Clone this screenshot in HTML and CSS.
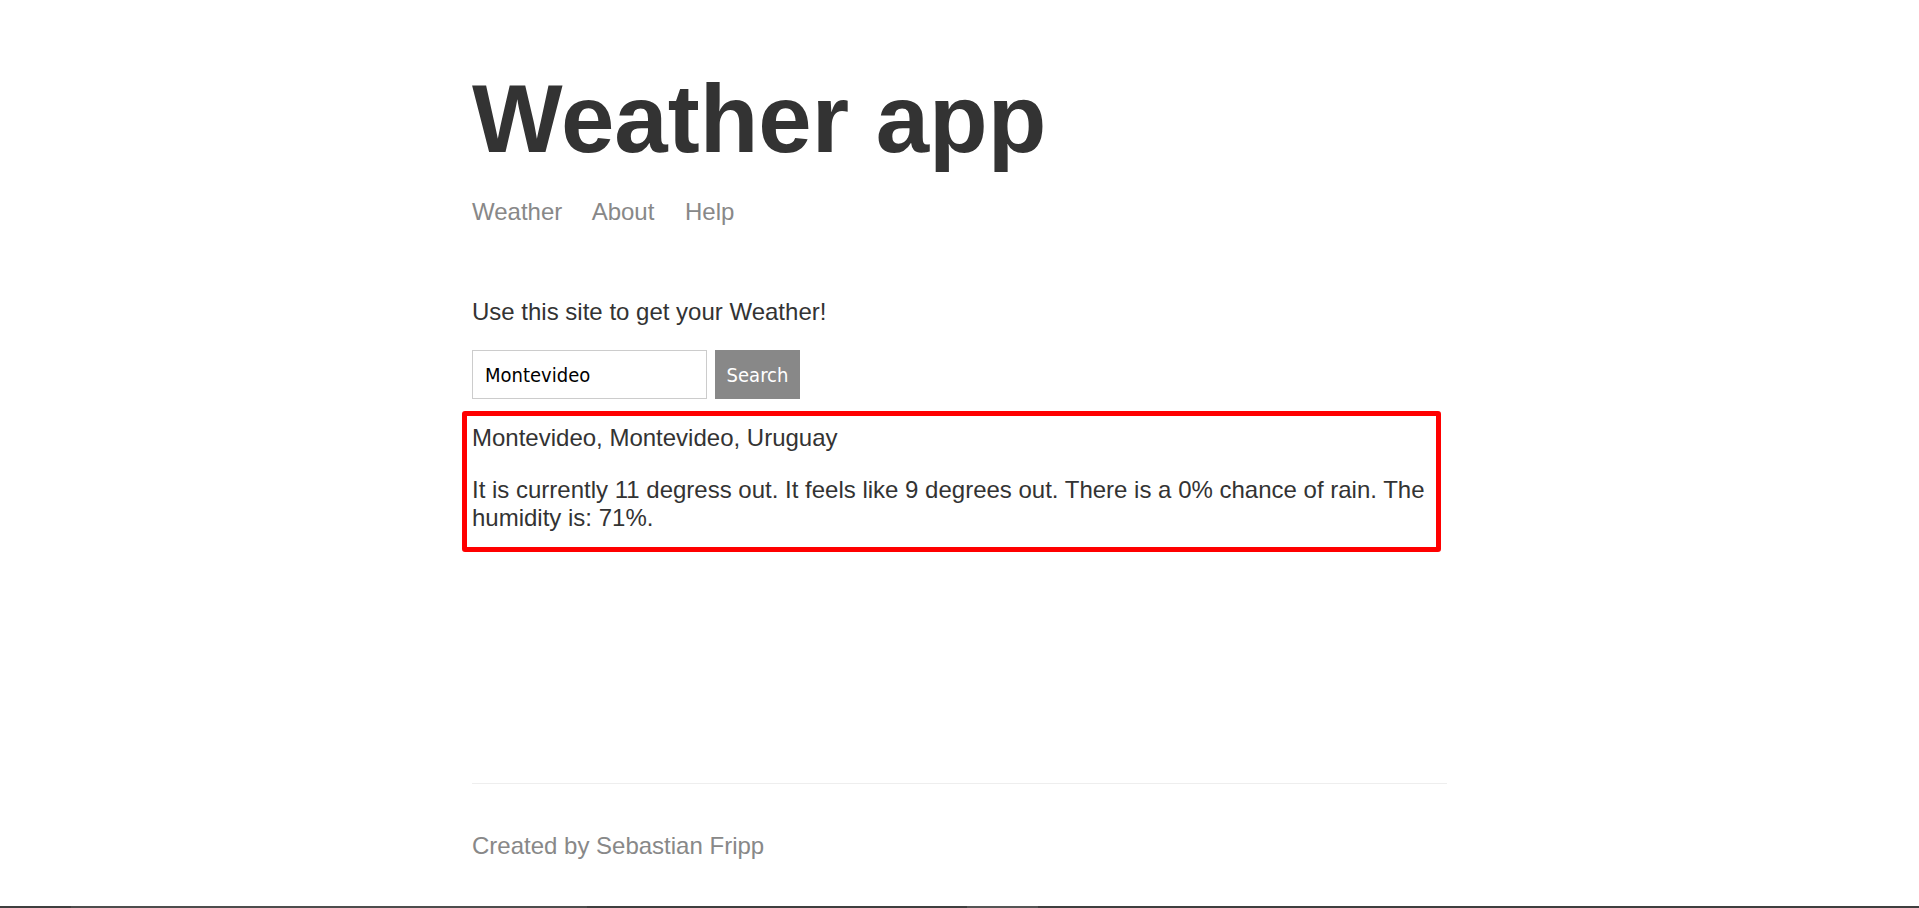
FILE: index.html
```html
<!DOCTYPE html>
<html lang="en">
<head>
<meta charset="utf-8">
<title>Weather</title>
<link rel="stylesheet" href="styles.css">
</head>
<body>
  <header class="site-header">
    <h1 class="title">Weather app</h1>
    <nav class="nav">
      <a class="nav-link" href="#">Weather</a>
      <a class="nav-link" href="#">About</a>
      <a class="nav-link" href="#">Help</a>
    </nav>
  </header>
  <main class="main-content">
    <p class="intro">Use this site to get your Weather!</p>
    <form class="search-form">
      <input class="search-input" type="text" value="Montevideo">
      <button class="search-button" type="button">Search</button>
    </form>
    <div class="result">
      <p class="result-location">Montevideo, Montevideo, Uruguay</p>
      <p class="result-forecast">It is currently 11 degress out. It feels like 9 degrees out. There is a 0% chance of rain. The humidity is: 71%.</p>
    </div>
  </main>
  <footer class="site-footer">
    <p class="credit">Created by Sebastian Fripp</p>
  </footer>
  <div class="taskbar-edge"></div>
</body>
</html>
```
FILE: styles.css
```css
html {
  background: #ffffff;
}

body {
  margin: 0 auto;
  max-width: 975px;
  padding: 0 24px;
  display: flex;
  flex-direction: column;
  min-height: 100vh;
  font-family: "Liberation Sans", Arial, sans-serif;
  font-size: 24px;
  color: #333333;
}

.site-header {
  margin-bottom: 48px;
}

.title {
  font-size: 96px;
  font-weight: bold;
  line-height: normal;
  margin: 64px 0 24px;
  color: #333333;
}

.nav-link {
  color: #888888;
  text-decoration: none;
  margin-right: 24px;
}

.main-content {
  flex-grow: 1;
}

.intro {
  margin: 24px 0;
}

.search-form {
  display: flex;
  gap: 8px;
  margin: 0;
}

.search-input,
.search-button {
  font-family: "DejaVu Sans Condensed", "Liberation Sans", sans-serif;
  font-size: 20px;
  height: 49px;
  box-sizing: border-box;
  margin: 0;
}

.search-input {
  width: 235px;
  border: 1px solid #cccccc;
  padding: 0 12px;
  color: #000000;
  background: #ffffff;
  outline: none;
}

.search-button {
  width: 85px;
  border: 1px solid #888888;
  background: #888888;
  color: #ffffff;
  padding: 0;
  cursor: pointer;
}

.result {
  margin: 12px 0 0 -10.5px;
  width: 979px;
  box-sizing: border-box;
  border: 5px solid #ff0000;
  border-radius: 3px;
  padding: 7.5px 5.5px 15.5px;
}

.result-location {
  margin: 0;
}

.result-forecast {
  margin: 24px 0 0;
}

.site-footer {
  margin-top: 24px;
  border-top: 1px solid #eeeeee;
  padding: 24px 0;
  color: #888888;
}

.credit {
  margin: 24px 0;
}

.taskbar-edge {
  position: fixed;
  left: 0;
  right: 0;
  bottom: 0;
  height: 2px;
  background: linear-gradient(to right,
    #3f3f3f 0, #3f3f3f 71px,
    #4d4d4d 71px, #4d4d4d 587px,
    #3f3f3f 587px, #3f3f3f 967px,
    #555555 967px, #555555 1038px,
    #3f3f3f 1038px);
}
```
